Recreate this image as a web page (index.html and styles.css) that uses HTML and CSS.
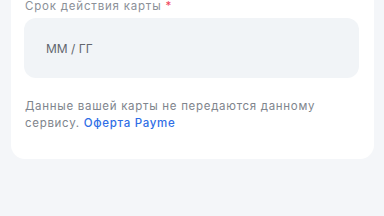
FILE: index.html
```html
<!DOCTYPE html>
<html lang="ru">
<head>
    <title>Оплата</title>
    <meta charset="UTF-8">
    <meta name="viewport" content="width=device-width, initial-scale=1.0">
    <link rel="stylesheet" href="styles.css">
</head>
<body>
    <div class="card">
        <label class="field-label" for="expiry">Срок действия карты <span class="req">*</span></label>
        <div class="field">
            <input id="expiry" type="text" placeholder="ММ / ГГ">
        </div>
        <p class="note">Данные вашей карты не передаются данному<br>сервису. <a href="#">Оферта Payme</a></p>
    </div>
</body>
</html>
```

FILE: styles.css
```css
body {
    font-family: Inter, "Noto Sans", sans-serif;
    margin: 0;
    padding: 0;
    background-color: #f4f6f9;
}
.card {
    margin: -14px 10px 0 11px;
    padding: 13px 15px 27px 13px;
    background-color: #fff;
    border-radius: 14px;
}
.field-label {
    display: block;
    padding-left: 1px;
    font-size: 11.5px;
    line-height: 14px;
    letter-spacing: 0.8px;
    color: #8b9098;
}
.field-label .req {
    color: #f0465a;
}
.field {
    margin-top: 5px;
}
.field input {
    box-sizing: border-box;
    width: 100%;
    height: 60px;
    padding: 0 0 0 22px;
    border: none;
    border-radius: 12px;
    background-color: #f1f4f7;
    font-family: inherit;
    font-size: 12px;
    outline: none;
}
.field input::placeholder {
    color: #62666e;
}
.note {
    margin: 20px 0 0 1px;
    font-size: 11.5px;
    line-height: 17px;
    letter-spacing: 0.7px;
    color: #80858d;
}
.note a {
    color: #2f6ee6;
    text-decoration: none;
    font-weight: 500;
}
```
